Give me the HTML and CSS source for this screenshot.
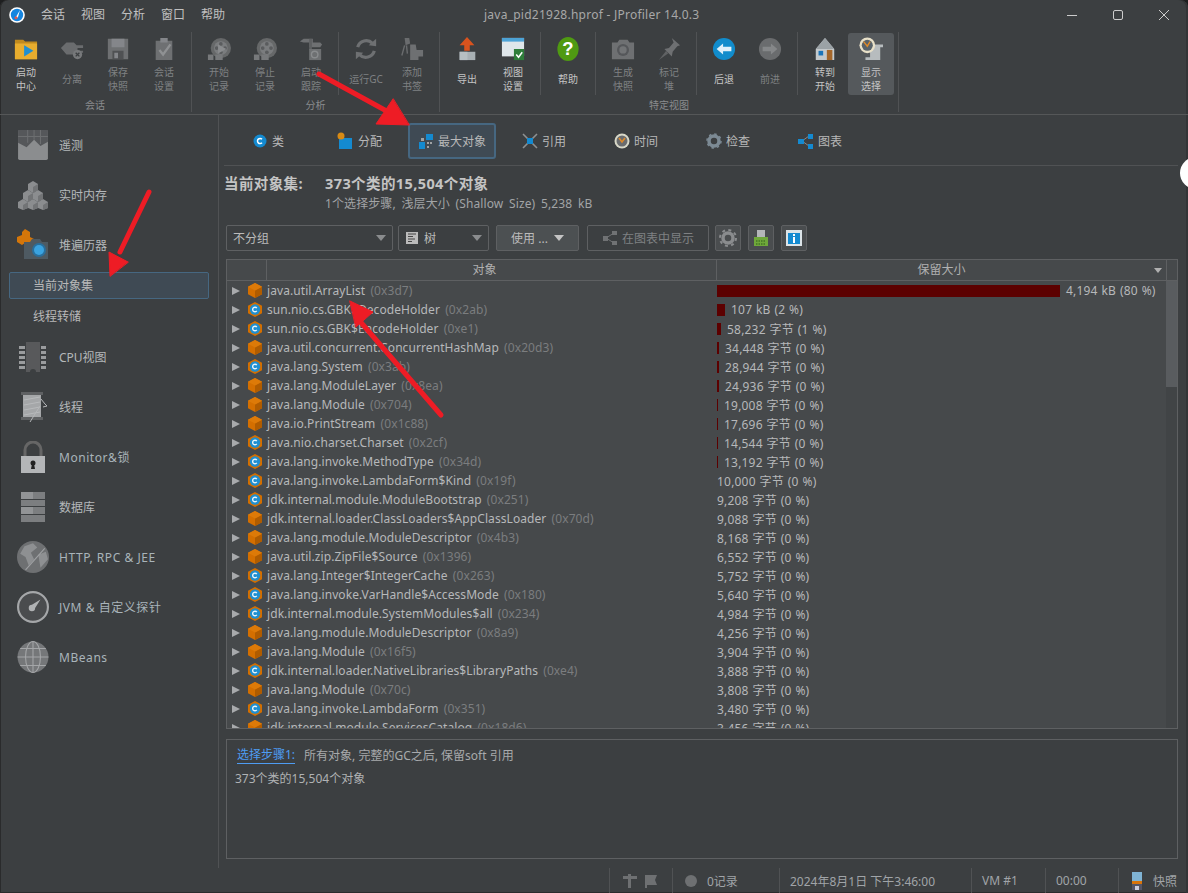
FILE: index.html
```html
<!DOCTYPE html>
<html lang="zh">
<head>
<meta charset="utf-8">
<title>java_pid21928.hprof - JProfiler 14.0.3</title>
<link rel="stylesheet" href="styles.css">
</head>
<body>
<svg class="defs" width="0" height="0">
  <defs>
    <symbol id="ico-cube" viewBox="0 0 14 15">
      <path d="M7 0 14 3.750v7.500L7 15 0 11.250v-7.500z" fill="#d46f00"/>
      <path d="M7 7.500 14 3.750v7.500L7 15z" fill="#b05c00"/>
      <path d="M7 0 14 3.750 7 7.500 0 3.750z" fill="#dd7a08"/>
    </symbol>
    <symbol id="ico-class" viewBox="0 0 14 15">
      <path d="M7 0 14 3.750v7.500L7 15 0 11.250v-7.500z" fill="#d46f00"/>
      <circle cx="7" cy="7.500" r="5.200" fill="#1f8fd0"/>
      <path d="M8.800 6.100A2.300 2.300 0 1 0 8.800 8.900" fill="none" stroke="#e8f4fb" stroke-width="1.400"/>
    </symbol>
    <symbol id="ico-reel" viewBox="0 0 26 26">
      <circle cx="15" cy="12" r="11" fill="#666869"/>
      <circle cx="15" cy="12" r="7.500" fill="#7a7c7e"/>
      <g fill="#5a5c5e"><circle cx="15" cy="7.500" r="2"/><circle cx="15" cy="16.500" r="2"/><circle cx="10.500" cy="12" r="2"/><circle cx="19.500" cy="12" r="2"/></g>
      <path d="M1 19h6v6H1zM9 19h8v6H9z" fill="#77797b"/>
    </symbol>
  </defs>
</svg>
<div class="window">
  <header class="titlebar">
    <div class="appicon">
      <svg width="16" height="16" viewBox="0 0 16 16"><circle cx="8" cy="8" r="7.800" fill="#fff"/><circle cx="8" cy="8" r="6.200" fill="#1585e0"/><path d="M11 3 7 10l1.800.8z" fill="#fff"/><circle cx="7" cy="10.800" r="1.500" fill="#e2574c"/></svg>
    </div>
    <nav class="menu"><span>会话</span><span>视图</span><span>分析</span><span>窗口</span><span>帮助</span></nav>
    <div class="wintitle">java_pid21928.hprof - JProfiler 14.0.3</div>
    <div class="winbtns">
      <svg width="12" height="12" viewBox="0 0 12 12"><path d="M1 6.500h10" stroke="#ccc"/></svg>
      <svg width="12" height="12" viewBox="0 0 12 12"><rect x="1.500" y="1.500" width="9" height="9" rx="1.500" fill="none" stroke="#ccc"/></svg>
      <svg width="12" height="12" viewBox="0 0 12 12"><path d="M1 1l10 10M11 1 1 11" stroke="#ccc"/></svg>
    </div>
  </header>

  <section class="toolbar">
    <div class="group">
      <div class="tools">
        <div class="tool on"><svg class="ticon" viewBox="0 0 26 26"><path d="M1 3h9l2 2h13v19H1z" fill="#c08a1e"/><path d="M1 7h24v17H1z" fill="#e8ad2e"/><path d="M11 9l10 6-10 6z" fill="#1f8fd0"/></svg><span>启动<br>中心</span></div>
        <div class="tool off"><svg class="ticon" viewBox="0 0 26 26"><path d="M1 12 7 6h8l3 3h7v3h-6v3h6v2h-7l-2 2H7z" fill="#6a6c6e"/><circle cx="19" cy="19" r="5" fill="#77797b"/><path d="M17 17l4 4M21 17l-4 4" stroke="#3c3f41" stroke-width="1.500"/></svg><span>分离</span></div>
        <div class="tool off"><svg class="ticon" viewBox="0 0 26 26"><path d="M2 2h22v22H2z" fill="#6e7072"/><path d="M6 2h14v9H6z" fill="#84868a"/><path d="M7 15h12v9H7z" fill="#4f5153"/><path d="M9 17h4v6H9z" fill="#84868a"/></svg><span>保存<br>快照</span></div>
        <div class="tool off"><svg class="ticon" viewBox="0 0 26 26"><path d="M4 4h18v21H4z" fill="#6e7072"/><path d="M9 1h8v5H9z" fill="#84868a"/><path d="M8 14l4 5 8-11" fill="none" stroke="#8f9193" stroke-width="2.500"/></svg><span>会话<br>设置</span></div>
      </div>
      <div class="glabel">会话</div>
    </div>
    <div class="gsep"></div>
    <div class="group">
      <div class="tools">
        <div class="tool off"><svg class="ticon" viewBox="0 0 26 26"><use href="#ico-reel"/><path d="M12 8l9 5-9 5z" fill="#8a8c8e"/></svg><span>开始<br>记录</span></div>
        <div class="tool off"><svg class="ticon" viewBox="0 0 26 26"><use href="#ico-reel"/></svg><span>停止<br>记录</span></div>
        <div class="tool off"><svg class="ticon" viewBox="0 0 26 26"><path d="M1 5 5 2h10v4h8l2 2-2 3H11V6H5z" fill="#6e7072"/><path d="M11 2h3v12h-3z" fill="#5e6062"/><path d="M11 13h13v12H11z" fill="#6e7072"/><circle cx="17" cy="19" r="3.500" fill="none" stroke="#8a8c8e" stroke-width="1.500"/></svg><span>启动<br>跟踪</span></div>
        <div class="isep"></div>
        <div class="tool off"><svg class="ticon" viewBox="0 0 26 26"><g fill="none" stroke="#6e7072" stroke-width="3.500"><path d="M4 11a9.500 9.500 0 0 1 16-4"/><path d="M22 15a9.500 9.500 0 0 1-16 4"/></g><path d="M16 9l8 1V2z" fill="#6e7072"/><path d="M10 17l-8-1v8z" fill="#6e7072"/></svg><span>运行GC</span></div>
        <div class="tool off"><svg class="ticon" viewBox="0 0 26 26"><path d="M5 1h5l1 6-5 2z" fill="#6a6c6e"/><path d="M5 9 2 20M7 9l1 9" stroke="#6a6c6e" stroke-width="1.500"/><path d="M11 8h6l1 6h7v7h-5v4h-9z" fill="#6e7072"/></svg><span>添加<br>书签</span></div>
      </div>
      <div class="glabel">分析</div>
    </div>
    <div class="gsep"></div>
    <div class="group">
      <div class="tools">
        <div class="tool on"><svg class="ticon" viewBox="0 0 26 26"><path d="M13 0l8 9h-5v6h-6V9H5z" fill="#d9531e"/><path d="M5 16h17v9H5z" fill="#a8b0b4"/><path d="M5 16h8.500v9H5z" fill="#b7bfc2"/></svg><span>导出</span></div>
        <div class="tool on"><svg class="ticon" viewBox="0 0 26 26"><path d="M1 1h24v20H1z" fill="#dfe6ea"/><path d="M1 1h24v4H1z" fill="#4da3d6"/><path d="M14 13h11v12H14z" fill="#2e7d3a"/><path d="M16.500 19l2.500 3 4-5.500" fill="none" stroke="#fff" stroke-width="1.600"/></svg><span>视图<br>设置</span></div>
        <div class="isep"></div>
        <div class="tool on"><svg class="ticon" viewBox="0 0 26 26"><ellipse cx="13" cy="13" rx="11.500" ry="13" fill="#4f9a12"/><text x="13" y="19" class="qmark">?</text></svg><span>帮助</span></div>
        <div class="isep"></div>
        <div class="tool off"><svg class="ticon" viewBox="0 0 26 26"><path d="M1 6h6l2-3h9l2 3h5v18H1z" fill="#6e7072"/><circle cx="13" cy="14" r="6.500" fill="#55575a"/><circle cx="13" cy="14" r="4" fill="#727476"/></svg><span>生成<br>快照</span></div>
        <div class="tool off"><svg class="ticon" viewBox="0 0 26 26"><path d="M16 1l9 8-3 1-5 6-1 5-8-8 5-1 5-6z" fill="#6e7072"/><path d="M10 15 2 25l10-7z" fill="#606264"/></svg><span>标记<br>堆</span></div>
        <div class="isep"></div>
        <div class="tool on"><svg class="ticon" viewBox="0 0 26 26"><circle cx="13" cy="13" r="12" fill="#118ccc"/><path d="M5 13l7-6v3.500h9v5h-9V19z" fill="#dff0fa"/></svg><span>后退</span></div>
        <div class="tool off"><svg class="ticon" viewBox="0 0 26 26"><circle cx="13" cy="13" r="12" fill="#6a6c6e"/><path d="M21 13l-7-6v3.500H5v5h9V19z" fill="#858789"/></svg><span>前进</span></div>
        <div class="isep"></div>
        <div class="tool on"><svg class="ticon" viewBox="0 0 26 26"><path d="M13 1 23 13v12H3V13z" fill="#c4c9cc"/><path d="M13 1 23 13H3z" fill="#9ba2a6"/><path d="M6 15h5v5H6z" fill="#1c74b8"/><path d="M15 14h6v11h-6z" fill="#a5672a"/></svg><span>转到<br>开始</span></div>
        <div class="tool on sel"><svg class="ticon" viewBox="0 0 26 26"><path d="M12 8h14v3h-3v14H7v-3h5z" fill="#b7bcbe"/><circle cx="9" cy="9" r="8.500" fill="#e8e0c8"/><circle cx="9" cy="9" r="6" fill="#59636a"/><path d="M5 5l4 5 3-5" fill="none" stroke="#e08a28" stroke-width="1.500"/></svg><span>显示<br>选择</span></div>
      </div>
      <div class="glabel">特定视图</div>
    </div>
    <div class="gsep"></div>
  </section>

  <main class="main">
    <aside class="sidebar">
      <div class="navitem"><svg class="nicon" viewBox="0 0 30 30"><rect x="1" y="1" width="28" height="28" rx="1.500" fill="#8b8d8f"/><path d="M1 1h28v11l-7 4-6-6-7 7-8-4z" fill="#55575a"/><path d="M10 1v12M16 1v9M22 1v13M1 7h28" stroke="#6c6e70"/></svg><span>遥测</span></div>
      <div class="navitem"><svg class="nicon" viewBox="0 0 32 30"><g fill="#8b8d8f"><path d="M16 1l5 3v6l-5 3-5-3V4z"/><path d="M11 10l5 3v6l-5 3-5-3v-6z"/><path d="M21 10l5 3v6l-5 3-5-3v-6z"/><path d="M6 19l5 3v6l-5 2-5-2v-6z"/><path d="M16 19l5 3v6l-5 2-5-2v-6z"/><path d="M26 19l5 3v6l-5 2-5-2v-6z"/></g><g fill="#727476"><path d="M16 7l5-3v6l-5 3zM11 16l5-3v6l-5 3zM21 16l5-3v6l-5 3zM6 25l5-3v6l-5 2zM16 25l5-3v6l-5 2zM26 25l5-3v6l-5 2z"/></g></svg><span>实时内存</span></div>
      <div class="navitem"><svg class="nicon" viewBox="0 0 32 32"><path d="M8 0l5 3v5l4 2v5l-5 2-4-3-3 2-5-3V8l5-2V3z" fill="#d4760a"/><path d="M7 13h6l2-3h8l2 3h6v17H7z" fill="#4e5a62"/><circle cx="22" cy="21" r="7" fill="#2a6f9c"/><circle cx="22" cy="21" r="5" fill="#3aa3e0"/></svg><span>堆遍历器</span></div>
      <div class="subitem current">当前对象集</div>
      <div class="subitem">线程转储</div>
      <div class="navitem"><svg class="nicon" viewBox="0 0 30 32"><path d="M8 1h14v30h-4a3 3 0 0 0-6 0H8z" fill="#58595b"/><path d="M1 5h6v3H1zM1 10h6v3H1zM1 15h6v3H1zM1 20h6v3H1zM1 25h6v3H1zM23 5h5v3h-5zM23 10h5v3h-5zM23 15h5v3h-5zM23 20h5v3h-5zM23 25h5v3h-5z" fill="#9a9c9e"/></svg><span>CPU视图</span></div>
      <div class="navitem"><svg class="nicon" viewBox="0 0 30 32"><path d="M3 1h22v3H3zM3 26h22v3H3z" fill="#5f6163"/><path d="M5 4h18v22H5z" fill="#a5a7a9"/><path d="M6 9l16-3M6 14l16-3M6 19l16-3M6 24l16-3" stroke="#b8babc"/><path d="M23 8l4 5 2 2-4 1M12 31l10-16" fill="none" stroke="#b4b6b8"/></svg><span>线程</span></div>
      <div class="navitem"><svg class="nicon" viewBox="0 0 30 32"><path d="M7 16V9a8 8 0 0 1 16 0v7" fill="none" stroke="#666" stroke-width="3"/><rect x="3" y="15" width="24" height="17" fill="#b4b6b8"/><circle cx="15" cy="22" r="2.500" fill="#222"/><path d="M14 23h2l1 5h-4z" fill="#222"/></svg><span class="lat">Monitor&amp;锁</span></div>
      <div class="navitem"><svg class="nicon" viewBox="0 0 30 32"><path d="M3 1h24v7H3zM3 9h24v6H3zM3 16h24v7H3zM3 24h24v7H3z" fill="#7c7e80"/><path d="M3 1h12v7H3zM3 16h12v7H3z" fill="#929496"/></svg><span>数据库</span></div>
      <div class="navitem"><svg class="nicon" viewBox="0 0 30 30"><circle cx="15" cy="15" r="15" fill="#6e7072"/><path d="M7 5l8-3 4 4-6 5 3 6-5 6-3-8-5-3zM20 13l7-3 2 7-7 8z" fill="#8e9092"/><path d="M8 27 26 7" stroke="#a0a2a4"/></svg><span class="lat">HTTP, RPC &amp; JEE</span></div>
      <div class="navitem"><svg class="nicon" viewBox="0 0 30 30"><circle cx="15" cy="15" r="14" fill="#4a4c4e" stroke="#a5a7a9" stroke-width="2"/><path d="M22 8l-8 5a3 3 0 1 0 3 3z" fill="#b0b2b4"/></svg><span class="lat">JVM &amp; 自定义探针</span></div>
      <div class="navitem"><svg class="nicon" viewBox="0 0 30 30"><circle cx="15" cy="15" r="14.500" fill="#757779"/><g fill="none" stroke="#a4a6a8"><ellipse cx="15" cy="15" rx="7" ry="14.500"/><path d="M15 .5v29M.5 15h29M3 7h24M3 23h24"/></g></svg><span class="lat">MBeans</span></div>
    </aside>

    <section class="content">
      <div class="tabs">
        <div class="tab t1"><svg width="16" height="16" viewBox="0 0 16 16"><circle cx="8" cy="8" r="6.500" fill="#148ad0"/><path d="M10 6.200A2.600 2.600 0 1 0 10 9.800" fill="none" stroke="#fff" stroke-width="1.500"/></svg><span>类</span></div>
        <div class="tab t2"><svg width="18" height="18" viewBox="0 0 18 18"><path d="M3 6h13v11H3z" fill="#148ad0"/><circle cx="5" cy="4" r="3.500" fill="#d88a14"/></svg><span>分配</span></div>
        <div class="tab t3 active"><svg width="16" height="16" viewBox="0 0 16 16"><path d="M1 9h6v7H1zM8 1h7v6H8z" fill="#148ad0"/><path d="M3 5h3v3H3zM9 9h2v2H9zM12 9h2v2h-2zM9 13h2v2H9z" fill="#a0a2a4"/></svg><span>最大对象</span></div>
        <div class="tab t4"><svg width="16" height="16" viewBox="0 0 16 16"><path d="M1 1l14 14M15 1 1 15" stroke="#8e9092" stroke-width="1.600"/><path d="M5 5h6v6H5z" fill="#148ad0"/></svg><span>引用</span></div>
        <div class="tab t5"><svg width="16" height="16" viewBox="0 0 16 16"><circle cx="8" cy="8" r="7.500" fill="#d8d8c8"/><circle cx="8" cy="8" r="5.500" fill="#6a6c6e"/><path d="M5 5l3 4 3-4" fill="none" stroke="#e08a28" stroke-width="1.500"/></svg><span>时间</span></div>
        <div class="tab t6"><svg width="16" height="16" viewBox="0 0 16 16"><circle cx="8" cy="8" r="5" fill="none" stroke="#7c8a94" stroke-width="3.500"/><circle cx="8" cy="8" r="7" fill="none" stroke="#7c8a94" stroke-width="1.500" stroke-dasharray="2.500 3"/></svg><span>检查</span></div>
        <div class="tab t7"><svg width="16" height="16" viewBox="0 0 16 16"><path d="M4 8l7-5M4 8l7 5" stroke="#888"/><path d="M0 6h6v5H0zM10 1h5v5h-5zM10 11h5v5h-5z" fill="#148ad0"/></svg><span>图表</span></div>
      </div>

      <div class="summary">
        <div class="sum-main"><b class="sum-label">当前对象集:</b><b>373个类的15,504个对象</b></div>
        <div class="sum-sub">1个选择步骤, 浅层大小 (Shallow Size) 5,238 kB</div>
      </div>

      <div class="controls">
        <div class="ctl select s1"><span>不分组</span><i class="caret"></i></div>
        <div class="ctl select s2"><svg width="14" height="14" viewBox="0 0 14 14"><path d="M1 1h12v12H1z" fill="#bbb"/><path d="M3 3h8M3 5.500h5M3 8h7M3 10.500h4" stroke="#444"/></svg><span>树</span><i class="caret"></i></div>
        <div class="ctl btn b1"><span>使用 ...</span><i class="caret light"></i></div>
        <div class="ctl btn b2"><svg width="16" height="16" viewBox="0 0 16 16"><path d="M4 8l8-5M4 8l8 5" stroke="#707274"/><path d="M1 6h5v5H1zM10 1h5v4h-5zM10 11h5v4h-5z" fill="#707274"/></svg><span>在图表中显示</span></div>
        <div class="ctl sq"><svg width="18" height="18" viewBox="0 0 18 18"><circle cx="9" cy="9" r="5" fill="none" stroke="#8a8c8e" stroke-width="3.500"/><circle cx="9" cy="9" r="8" fill="none" stroke="#8a8c8e" stroke-width="2" stroke-dasharray="3 3.300"/></svg></div>
        <div class="ctl sq"><svg width="18" height="18" viewBox="0 0 18 18"><path d="M5 1h8v7H5z" fill="#b4b6b8"/><path d="M2 8h14v9H2z" fill="#6fa83a"/><path d="M4 12h10M4 15h10" stroke="#2d5a1a" stroke-dasharray="1.500 1"/></svg></div>
        <div class="ctl sq"><svg width="18" height="18" viewBox="0 0 18 18"><path d="M1 1h16v16H1z" fill="#dce4e8"/><path d="M3 4h12v11H3z" fill="#148ad0"/><rect x="8" y="5" width="2" height="2" fill="#fff"/><rect x="8" y="8" width="2" height="6" fill="#fff"/></svg></div>
      </div>

      <div class="table">
        <div class="thead">
          <div class="th th0"></div>
          <div class="th th1">对象</div>
          <div class="th th2">保留大小<i class="caret sort"></i></div>
          <div class="th th3"></div>
        </div>
        <div class="tbody">
          <div class="rows">
            <div class="row"><i class="arrow"></i><svg class="oicon"><use href="#ico-cube"/></svg><div class="name">java.util.ArrayList <em>(0x3d7)</em></div><div class="val"><i class="bar" style="width:343px"></i>4,194 kB (80 %)</div></div>
            <div class="row"><i class="arrow"></i><svg class="oicon"><use href="#ico-class"/></svg><div class="name">sun.nio.cs.GBK$DecodeHolder <em>(0x2ab)</em></div><div class="val"><i class="bar" style="width:8px"></i>107 kB (2 %)</div></div>
            <div class="row"><i class="arrow"></i><svg class="oicon"><use href="#ico-class"/></svg><div class="name">sun.nio.cs.GBK$EncodeHolder <em>(0xe1)</em></div><div class="val"><i class="bar" style="width:4px"></i>58,232 字节 (1 %)</div></div>
            <div class="row"><i class="arrow"></i><svg class="oicon"><use href="#ico-cube"/></svg><div class="name">java.util.concurrent.ConcurrentHashMap <em>(0x20d3)</em></div><div class="val"><i class="bar" style="width:2px"></i>34,448 字节 (0 %)</div></div>
            <div class="row"><i class="arrow"></i><svg class="oicon"><use href="#ico-class"/></svg><div class="name">java.lang.System <em>(0x3ab)</em></div><div class="val"><i class="bar" style="width:2px"></i>28,944 字节 (0 %)</div></div>
            <div class="row"><i class="arrow"></i><svg class="oicon"><use href="#ico-cube"/></svg><div class="name">java.lang.ModuleLayer <em>(0x8ea)</em></div><div class="val"><i class="bar" style="width:2px"></i>24,936 字节 (0 %)</div></div>
            <div class="row"><i class="arrow"></i><svg class="oicon"><use href="#ico-cube"/></svg><div class="name">java.lang.Module <em>(0x704)</em></div><div class="val"><i class="bar" style="width:1px"></i>19,008 字节 (0 %)</div></div>
            <div class="row"><i class="arrow"></i><svg class="oicon"><use href="#ico-cube"/></svg><div class="name">java.io.PrintStream <em>(0x1c88)</em></div><div class="val"><i class="bar" style="width:1px"></i>17,696 字节 (0 %)</div></div>
            <div class="row"><i class="arrow"></i><svg class="oicon"><use href="#ico-class"/></svg><div class="name">java.nio.charset.Charset <em>(0x2cf)</em></div><div class="val"><i class="bar" style="width:1px"></i>14,544 字节 (0 %)</div></div>
            <div class="row"><i class="arrow"></i><svg class="oicon"><use href="#ico-class"/></svg><div class="name">java.lang.invoke.MethodType <em>(0x34d)</em></div><div class="val"><i class="bar" style="width:1px"></i>13,192 字节 (0 %)</div></div>
            <div class="row"><i class="arrow"></i><svg class="oicon"><use href="#ico-class"/></svg><div class="name">java.lang.invoke.LambdaForm$Kind <em>(0x19f)</em></div><div class="val">10,000 字节 (0 %)</div></div>
            <div class="row"><i class="arrow"></i><svg class="oicon"><use href="#ico-class"/></svg><div class="name">jdk.internal.module.ModuleBootstrap <em>(0x251)</em></div><div class="val">9,208 字节 (0 %)</div></div>
            <div class="row"><i class="arrow"></i><svg class="oicon"><use href="#ico-cube"/></svg><div class="name">jdk.internal.loader.ClassLoaders$AppClassLoader <em>(0x70d)</em></div><div class="val">9,088 字节 (0 %)</div></div>
            <div class="row"><i class="arrow"></i><svg class="oicon"><use href="#ico-cube"/></svg><div class="name">java.lang.module.ModuleDescriptor <em>(0x4b3)</em></div><div class="val">8,168 字节 (0 %)</div></div>
            <div class="row"><i class="arrow"></i><svg class="oicon"><use href="#ico-cube"/></svg><div class="name">java.util.zip.ZipFile$Source <em>(0x1396)</em></div><div class="val">6,552 字节 (0 %)</div></div>
            <div class="row"><i class="arrow"></i><svg class="oicon"><use href="#ico-class"/></svg><div class="name">java.lang.Integer$IntegerCache <em>(0x263)</em></div><div class="val">5,752 字节 (0 %)</div></div>
            <div class="row"><i class="arrow"></i><svg class="oicon"><use href="#ico-class"/></svg><div class="name">java.lang.invoke.VarHandle$AccessMode <em>(0x180)</em></div><div class="val">5,640 字节 (0 %)</div></div>
            <div class="row"><i class="arrow"></i><svg class="oicon"><use href="#ico-class"/></svg><div class="name">jdk.internal.module.SystemModules$all <em>(0x234)</em></div><div class="val">4,984 字节 (0 %)</div></div>
            <div class="row"><i class="arrow"></i><svg class="oicon"><use href="#ico-cube"/></svg><div class="name">java.lang.module.ModuleDescriptor <em>(0x8a9)</em></div><div class="val">4,256 字节 (0 %)</div></div>
            <div class="row"><i class="arrow"></i><svg class="oicon"><use href="#ico-cube"/></svg><div class="name">java.lang.Module <em>(0x16f5)</em></div><div class="val">3,904 字节 (0 %)</div></div>
            <div class="row"><i class="arrow"></i><svg class="oicon"><use href="#ico-class"/></svg><div class="name">jdk.internal.loader.NativeLibraries$LibraryPaths <em>(0xe4)</em></div><div class="val">3,888 字节 (0 %)</div></div>
            <div class="row"><i class="arrow"></i><svg class="oicon"><use href="#ico-cube"/></svg><div class="name">java.lang.Module <em>(0x70c)</em></div><div class="val">3,808 字节 (0 %)</div></div>
            <div class="row"><i class="arrow"></i><svg class="oicon"><use href="#ico-class"/></svg><div class="name">java.lang.invoke.LambdaForm <em>(0x351)</em></div><div class="val">3,480 字节 (0 %)</div></div>
            <div class="row"><i class="arrow"></i><svg class="oicon"><use href="#ico-cube"/></svg><div class="name">jdk.internal.module.ServicesCatalog <em>(0x18d6)</em></div><div class="val">3,456 字节 (0 %)</div></div>
          </div>
          <div class="scroll"><div class="thumb"></div></div>
        </div>
      </div>

      <div class="details">
        <div class="step"><a class="link">选择步骤1:</a><span>所有对象, 完整的GC之后, 保留soft 引用</span></div>
        <div class="stepres">373个类的15,504个对象</div>
      </div>
    </section>
    <div class="edgeblob"></div>
  </main>

  <footer class="status">
    <div class="scell c0"><svg width="16" height="14" viewBox="0 0 16 14"><path d="M1 2h5V0h3v2h6v3H9v9H6V5H1z" fill="#6e7072"/></svg><svg width="14" height="14" viewBox="0 0 14 14"><path d="M1 1h12l-2 5 2 5H3v3H1z" fill="#6e7072"/></svg></div>
    <div class="scell c1"><i class="dot"></i><span>0记录</span></div>
    <div class="scell c2">2024年8月1日 下午3:46:00</div>
    <div class="scell c3">VM #1</div>
    <div class="scell c4">00:00</div>
    <div class="scell c5"><svg width="12" height="20" viewBox="0 0 12 20"><path d="M1 1h10v9H1z" fill="#7fb3d4"/><path d="M1 10h10v3H1z" fill="#d9740a"/><path d="M1 13h10v6H1z" fill="#556"/><path d="M4 15h4v4H4z" fill="#ccd"/></svg><span>快照</span></div>
  </footer>

  <svg class="arrows" width="1188" height="893" viewBox="0 0 1188 893">
    <g fill="#ee1c25" stroke="#ee1c25" stroke-linecap="round" stroke-linejoin="round">
      <path d="M319 74 392 114" stroke-width="5" fill="none"/>
      <path d="M409 125 376 124 393 99z" stroke-width="1"/>
      <path d="M149 192 120 252" stroke-width="5" fill="none"/>
      <path d="M110 276 109 252 128 262z" stroke-width="1"/>
      <path d="M441 415 358 319" stroke-width="5" fill="none"/>
      <path d="M350 301 373 312 356 327z" stroke-width="1"/>
    </g>
  </svg>
</div>
</body>
</html>
```

FILE: styles.css
```css
* { box-sizing: border-box; }
html, body { margin: 0; padding: 0; height: 100%; overflow: hidden; background: #1e1f20; }
body { font-family: "Noto Sans", "Noto Sans CJK SC", sans-serif; font-size: 12px; color: #bbbbbb; }
.defs { position: absolute; }
.window { position: relative; width: 1188px; height: 893px; display: flex; flex-direction: column; background: #3c3f41; border-radius: 8px 8px 0 0; overflow: hidden; box-shadow: inset 1px 0 0 #2a2b2c, inset -2px 0 0 #333537, inset 0 -1px 0 #2a2b2c; }

.titlebar { height: 30px; display: flex; align-items: center; flex: none; position: relative; }
.appicon { width: 16px; height: 16px; margin-left: 9px; line-height: 0; }
.menu { display: flex; margin-left: 16px; gap: 16px; }
.menu span { font-size: 12px; line-height: 16px; color: #c0c0c0; }
.wintitle { position: absolute; left: 484px; top: 7px; line-height: 16px; color: #a8a8a8; font-size: 12px; letter-spacing: .25px; }
.winbtns { margin-left: auto; display: flex; gap: 34px; padding-right: 18px; line-height: 0; }

.toolbar { height: 85px; display: flex; padding-left: 3px; flex: none; border-bottom: 1px solid #555758; }
.group { display: flex; flex-direction: column; }
.tools { display: flex; height: 68px; padding-top: 3px; }
.tool { width: 46px; height: 62px; display: flex; flex-direction: column; align-items: center; padding-top: 3px; border-radius: 3px; }
.tool .ticon { width: 24px; height: 26px; flex: none; }
.tool span { flex: 1; display: flex; align-items: center; text-align: center; font-size: 10px; line-height: 14px; padding-top: 1px; }
.tool.on span { color: #c4c4c4; }
.tool.off span { color: #7f8183; }
.tool.sel { background: #55595c; }
.qmark { font: bold 20px "Liberation Sans", sans-serif; fill: #fff; text-anchor: middle; }
.isep { width: 1px; height: 63px; margin: -1px 4px 0; background: #505254; flex: none; }
.gsep { width: 1px; height: 80px; margin: 2px 4px 0; background: #505254; flex: none; }
.glabel { text-align: center; font-size: 10px; line-height: 14px; color: #8a8c8e; }

.main { flex: 1; min-height: 0; display: flex; position: relative; }
.edgeblob { position: absolute; left: 1180px; top: 42px; width: 32px; height: 32px; border-radius: 50%; background: #fff; }
.sidebar { width: 219px; flex: none; border-right: 1px solid #505254; padding: 5px 9px 0 9px; display: flex; flex-direction: column; }
.navitem { height: 50px; display: flex; align-items: center; padding-left: 8px; gap: 10px; flex: none; }
.navitem .nicon { width: 32px; height: 32px; flex: none; }
.navitem span { font-size: 12px; color: #b4b8ba; }
.navitem .lat { letter-spacing: .55px; color: #a9b4ba; }
.subitem { height: 27px; flex: none; padding-left: 23px; line-height: 25px; font-size: 12px; color: #b8b8b8; border: 1px solid transparent; margin-bottom: 2px; }
.subitem.current { background: #3f4a54; border-color: #466781; border-radius: 2px; margin-top: 2px; margin-bottom: 4px; }

.content { flex: 1; min-width: 0; padding: 0 10px 0 5px; display: flex; flex-direction: column; }
.tabs { height: 51px; flex: none; position: relative; border-bottom: 1px solid #505254; }
.tab { height: 36px; display: flex; align-items: center; gap: 4px; font-size: 12px; color: #b8b8b8; position: absolute; top: 8px; }
.tab svg { flex: none; }
.t1 { left: 28px; }
.t2 { left: 112px; }
.t3 { left: 184px; width: 88px; justify-content: center; }
.t4 { left: 298px; }
.t5 { left: 390px; }
.t6 { left: 482px; }
.t7 { left: 574px; }
.tab.active { background: #3f4a54; border: 2px solid #466781; border-radius: 3px; }

.summary { padding-top: 7px; height: 59px; flex: none; }
.sum-main { line-height: 20px; font-size: 14.500px; letter-spacing: .4px; display: flex; color: #c4c4c4; }
.sum-label { width: 101px; flex: none; }
.sum-sub { margin-left: 101px; margin-top: 2px; line-height: 18px; color: #a2a4a6; font-size: 12px; word-spacing: 2.500px; letter-spacing: .1px; }

.controls { display: flex; height: 26px; flex: none; padding-left: 2px; }
.ctl { height: 26px; display: flex; align-items: center; border: 1px solid #5e6062; border-radius: 2px; flex: none; background: #46494b; }
.select { padding: 0 6px; background: #3c3f41; }
.s1 { width: 167px; margin-right: 5px; }
.s2 { width: 91px; margin-right: 7px; gap: 5px; }
.b1 { width: 83px; margin-right: 8px; justify-content: center; gap: 6px; background: #4c5052; color: #bbb; }
.b2 { width: 122px; margin-right: 6px; justify-content: center; gap: 4px; background: #3c3f41; color: #7f8183; }
.sq { width: 26px; margin-right: 7px; justify-content: center; background: #4a4d4f; }
.caret { display: block; width: 0; height: 0; border-left: 5px solid transparent; border-right: 5px solid transparent; border-top: 6px solid #8a8c8e; margin-left: auto; }
.b1 .caret { margin-left: 0; }
.caret.light { border-top-color: #c4c4c4; }

.table { margin: 8px 0 0 2px; height: 470px; flex: none; border: 1px solid #5e6062; display: flex; flex-direction: column; background: #46494b; overflow: hidden; }
.thead { height: 21px; display: flex; border-bottom: 1px solid #5e6062; flex: none; color: #b0b0b0; font-size: 12px; line-height: 20px; text-align: center; }
.th { position: relative; border-right: 1px solid #5e6062; }
.th0 { width: 40px; flex: none; }
.th1 { width: 450px; flex: none; padding-right: 14px; }
.th2 { flex: 1; }
.th3 { width: 10px; flex: none; border-right: 0; }
.caret.sort { position: absolute; right: 4px; top: 8px; border-left-width: 4px; border-right-width: 4px; border-top-width: 5px; border-top-color: #b0b0b0; }
.tbody { flex: 1; display: flex; min-height: 0; overflow: hidden; }
.rows { flex: 1; min-width: 0; }
.row { height: 19px; display: flex; align-items: center; padding-left: 5px; white-space: nowrap; font-size: 12px; }
.arrow { width: 0; height: 0; border-top: 4.500px solid transparent; border-bottom: 4.500px solid transparent; border-left: 8px solid #a8aaac; flex: none; }
.oicon { width: 14px; height: 15px; margin-left: 8px; flex: none; }
.name { width: 455px; flex: none; padding-left: 5px; color: #b6b8ba; letter-spacing: .08px; }
.name em { font-style: normal; color: #7b7d7f; margin-left: 2px; }
.val { flex: 1; display: flex; align-items: center; color: #b6b8ba; letter-spacing: .2px; word-spacing: .5px; white-space: pre; }
.bar { height: 12px; background: #5c0000; margin-right: 6px; display: block; flex: none; }
.scroll { width: 11px; flex: none; background: #414446; }
.thumb { height: 106px; background: #595c5f; }

.details { margin: 10px 0 0 2px; height: 120px; flex: none; border: 1px solid #5e6062; padding: 7px 8px; }
.step { display: flex; gap: 9px; line-height: 18px; padding-left: 2px; color: #a8aaac; font-size: 12px; }
.link { color: #4e9cf2; border-bottom: 1px solid #4e9cf2; line-height: 16px; height: 17px; }
.stepres { margin-top: 5px; line-height: 18px; color: #b0b2b4; font-size: 12px; }

.status { height: 25px; flex: none; display: flex; align-items: center; justify-content: flex-end; color: #a0a4a8; font-size: 12px; }
.scell { height: 25px; display: flex; align-items: center; border-left: 1px solid #505254; flex: none; }
.c0 { width: 63px; padding-left: 12px; gap: 6px; }
.c1 { width: 107px; padding-left: 12px; gap: 10px; }
.c2 { width: 192px; padding-left: 10px; }
.c3 { width: 74px; padding-left: 10px; }
.c4 { width: 73px; padding-left: 10px; }
.c5 { width: 70px; padding-left: 12px; gap: 10px; }
.dot { width: 12px; height: 12px; border-radius: 50%; background: #6e7072; display: block; }

.arrows { position: absolute; left: 0; top: 0; pointer-events: none; }
```
